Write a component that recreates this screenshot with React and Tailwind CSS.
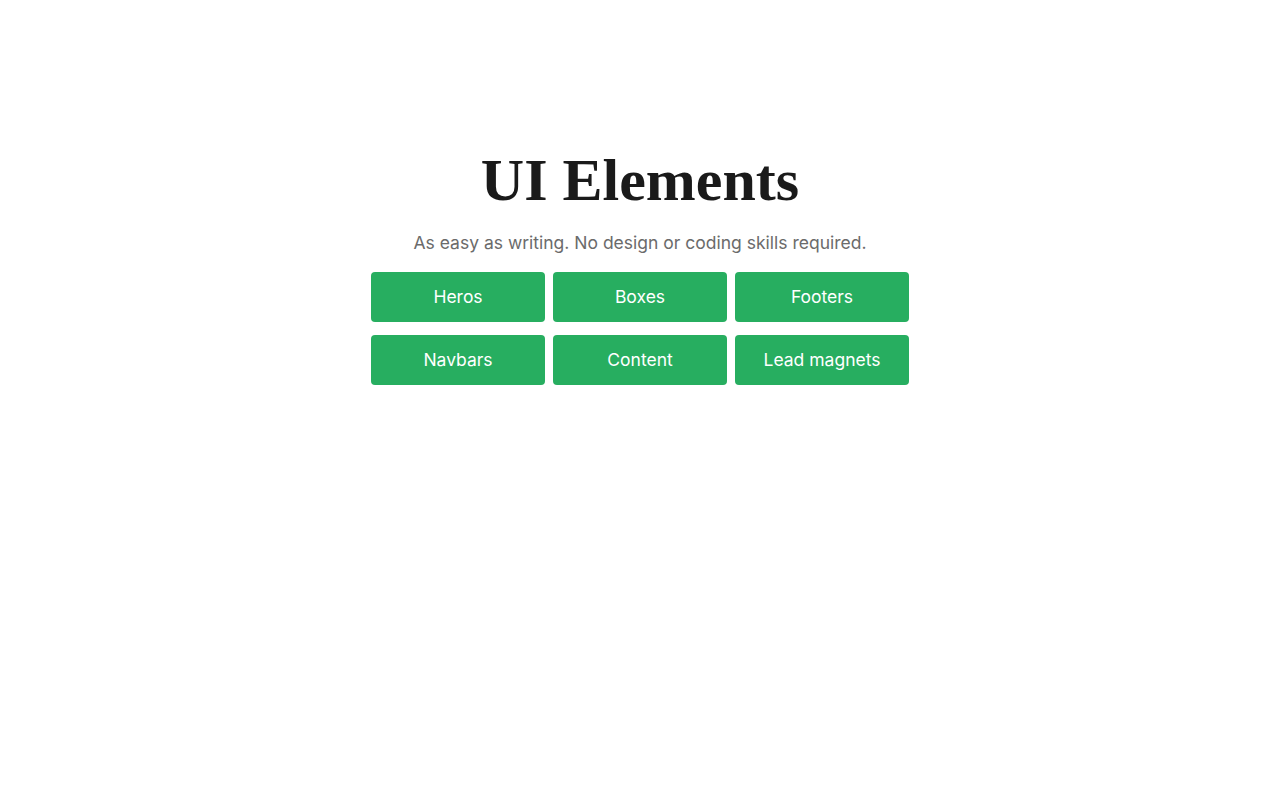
export default function App() {
  const items = ["Heros", "Boxes", "Footers", "Navbars", "Content", "Lead magnets"];
  return (
    <div className="min-h-[800px] bg-white flex flex-col items-center pt-[145px] font-['Inter',sans-serif]">
      <h1 className="text-[60px] leading-[70px] font-bold text-[#1a1a1a] font-['Liberation_Serif',serif]">
        UI Elements
      </h1>
      <p className="mt-[15px] text-[17.5px] leading-[26px] text-[#6b6b6b]">
        As easy as writing. No design or coding skills required.
      </p>
      <div className="mt-[16px] grid grid-cols-3 gap-x-2 gap-y-[13px] w-[538px]">
        {items.map((t) => (
          <button key={t} className="h-[50px] rounded bg-[#27ae60] text-white text-[17.5px]">
            {t}
          </button>
        ))}
      </div>
    </div>
  );
}
